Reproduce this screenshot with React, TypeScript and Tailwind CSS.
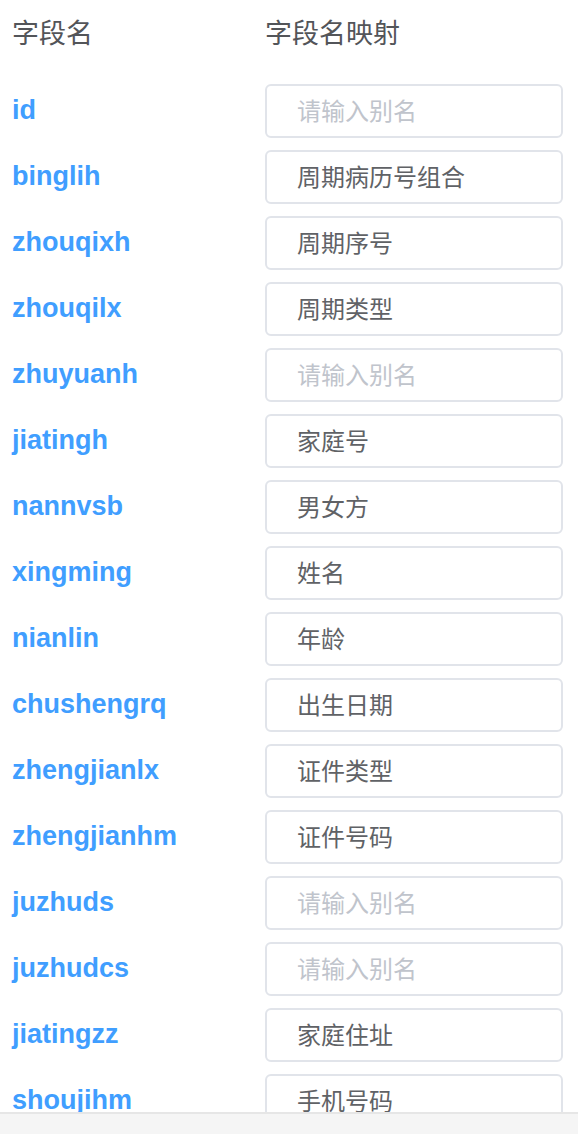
import React from "react";

type Campo = { nome: string; alias: string };

const campos: Campo[] = [
  { nome: "id", alias: "" },
  { nome: "binglih", alias: "周期病历号组合" },
  { nome: "zhouqixh", alias: "周期序号" },
  { nome: "zhouqilx", alias: "周期类型" },
  { nome: "zhuyuanh", alias: "" },
  { nome: "jiatingh", alias: "家庭号" },
  { nome: "nannvsb", alias: "男女方" },
  { nome: "xingming", alias: "姓名" },
  { nome: "nianlin", alias: "年龄" },
  { nome: "chushengrq", alias: "出生日期" },
  { nome: "zhengjianlx", alias: "证件类型" },
  { nome: "zhengjianhm", alias: "证件号码" },
  { nome: "juzhuds", alias: "" },
  { nome: "juzhudcs", alias: "" },
  { nome: "jiatingzz", alias: "家庭住址" },
  { nome: "shoujihm", alias: "手机号码" },
  { nome: "lianxidh", alias: "" },
];

const cjk = '"Noto Sans CJK SC", "Noto Sans", sans-serif';

export default function App() {
  return (
    <div className="w-[578px] h-[1134px] flex flex-col bg-white overflow-hidden">
      {/* area rolavel */}
      <div className="flex-1 overflow-hidden pl-[12px]">
        <div className="flex h-[66px] items-center pb-[2px] text-[27px] text-[#535559]" style={{ fontFamily: cjk }}>
          <div className="w-[253px]">字段名</div>
          <div>字段名映射</div>
        </div>

        <div className="mt-[18px] flex flex-col gap-[12px]">
          {campos.map((c) => (
            <div key={c.nome} className="flex items-center h-[54px]">
              <div
                className="w-[253px] text-[27px] font-bold text-[#409eff] leading-none -mt-[2px]"
                style={{ fontFamily: '"Liberation Sans", Arial, sans-serif' }}
              >
                {c.nome}
              </div>
              <input
                readOnly
                defaultValue={c.alias}
                placeholder="请输入别名"
                className="w-[298px] h-[54px] rounded-[6px] border-2 border-[#e1e4ea] bg-white pl-[30px] pb-[3px] text-[24px] text-[#606266] placeholder:text-[#c0c4cc] outline-none"
                style={{ fontFamily: cjk }}
              />
            </div>
          ))}
        </div>
      </div>

      {/* rodape */}
      <div className="h-[22px] shrink-0 border-t-2 border-[#e6e6e6] bg-[#f5f5f5]" />
    </div>
  );
}
